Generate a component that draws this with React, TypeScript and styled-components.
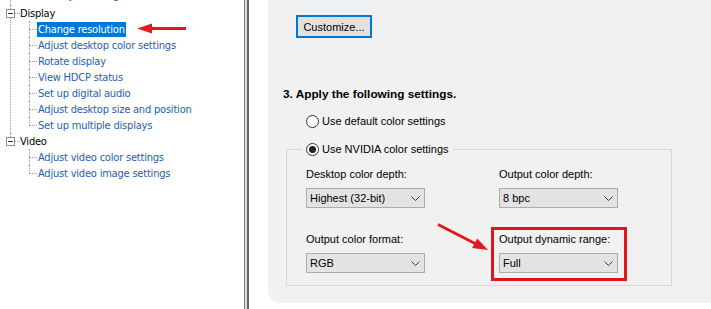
import styled, { createGlobalStyle } from "styled-components";

const GlobalStyle = createGlobalStyle`
  html, body {
    margin: 0;
    padding: 0;
    background: #ffffff;
  }
  body {
    width: 711px;
    height: 309px;
    overflow: hidden;
  }
`;

const Screen = styled.div`
  position: relative;
  display: flex;
  width: 711px;
  height: 309px;
  overflow: hidden;
  background: #ffffff;
`;

/* ---------- left tree ---------- */

const Sidebar = styled.div`
  width: 244px;
  flex-shrink: 0;
  overflow: hidden;
  background: #ffffff;
  font-family: "DejaVu Sans Condensed", "Liberation Sans", Tahoma, sans-serif;
  font-size: 11px;
  letter-spacing: -0.2px;
`;

const Tree = styled.div`
  margin-top: -11px;
`;

const Group = styled.div<{ $last?: boolean }>`
  position: relative;

  &::before {
    content: "";
    position: absolute;
    left: 10px;
    top: 0;
    height: ${(p) => (p.$last ? "8px" : "100%")};
    border-left: 1px dotted #a0a0a0;
  }
`;

const GroupHead = styled.div`
  position: relative;
  height: 16px;
  display: flex;
  align-items: center;
  padding-left: 6px;
  color: #000000;
`;

const ExpandBox = styled.span`
  position: relative;
  z-index: 1;
  width: 9px;
  height: 9px;
  box-sizing: border-box;
  border: 1px solid #8f8f8f;
  background: #ffffff;
  display: flex;
  align-items: center;
  justify-content: center;

  &::after {
    content: "";
    width: 5px;
    height: 1px;
    background: #333333;
  }
`;

const Stub = styled.span<{ $w: number }>`
  width: ${(p) => p.$w}px;
  height: 0;
  border-top: 1px dotted #a0a0a0;
`;

const ChildRow = styled.div<{ $last?: boolean; $shift?: number }>`
  position: relative;
  height: 16px;
  display: flex;
  align-items: center;
  padding-left: 29px;

  &::before {
    content: "";
    position: absolute;
    left: 29px;
    top: 0;
    height: ${(p) => (p.$last ? "8px" : "16px")};
    border-left: 1px dotted #a0a0a0;
  }
`;

const ItemLabel = styled.span<{ $selected?: boolean; $raise?: number }>`
  padding: 0 1px;
  line-height: 15px;
  white-space: nowrap;
  margin-top: ${(p) => -(p.$raise ?? 0)}px;
  color: ${(p) => (p.$selected ? "#ffffff" : "#1a60b8")};
  background: ${(p) => (p.$selected ? "#0078d7" : "transparent")};
`;

const Splitter = styled.div`
  width: 5px;
  flex-shrink: 0;
  box-sizing: border-box;
  border-left: 1px solid #7c7c7c;
  border-right: 2px solid #666666;
  background: #dedede;
`;

/* ---------- right settings ---------- */

const Content = styled.div`
  flex: 1;
  padding-left: 19px;
  background: #ffffff;
  font-family: "Liberation Sans", "Segoe UI", sans-serif;
  font-size: 11px;
  color: #000000;
`;

const Panel = styled.div`
  height: 303px;
  box-sizing: border-box;
  padding: 15px 0 0 15px;
  background: #f1f1f1;
  border-bottom-left-radius: 12px;
  display: flex;
  flex-direction: column;
  align-items: flex-start;
`;

const Button = styled.div`
  margin-left: 13px;
  width: 76px;
  height: 23px;
  box-sizing: border-box;
  border: 2px solid #0078d7;
  background: #e1e1e1;
  display: flex;
  align-items: center;
  justify-content: center;
`;

const Heading = styled.div`
  margin-top: 48px;
  line-height: 16px;
  font-size: 11.8px;
  font-weight: bold;
`;

const RadioRow = styled.label<{ $offset?: number }>`
  margin-left: ${(p) => p.$offset ?? 0}px;
  height: 16px;
  display: flex;
  align-items: center;
  gap: 3px;
  white-space: nowrap;
`;

const RadioCircle = styled.span<{ $checked?: boolean }>`
  width: 13px;
  height: 13px;
  box-sizing: border-box;
  border-radius: 50%;
  border: 1px solid #333333;
  background: #ffffff;
  display: flex;
  align-items: center;
  justify-content: center;

  &::after {
    content: "";
    width: 7px;
    height: 7px;
    border-radius: 50%;
    background: ${(p) => (p.$checked ? "#222222" : "transparent")};
  }
`;

const Spacer = styled.div<{ $h: number }>`
  height: ${(p) => p.$h}px;
`;

const GroupBox = styled.fieldset`
  margin: 12px 0 0 3px;
  width: 386px;
  box-sizing: border-box;
  padding: 5px 44px 4px 11px;
  border: 1px solid #d7d7d7;
  min-inline-size: 0;
`;

const Legend = styled.legend`
  margin-left: 4px;
  padding: 0 4px;
`;

const CellGrid = styled.div`
  display: grid;
  grid-template-columns: 136px 136px;
  column-gap: 57px;
  row-gap: 11px;
`;

const Cell = styled.div<{ $highlight?: boolean }>`
  border: 3px solid ${(p) => (p.$highlight ? "#e0141b" : "transparent")};
  padding: 1px 6px 5px 5px;
`;

const FieldLabel = styled.div`
  height: 16px;
  line-height: 16px;
  white-space: nowrap;
`;

const Select = styled.div`
  margin-top: 6px;
  width: 119px;
  height: 20px;
  box-sizing: border-box;
  border: 1px solid #adadad;
  background: #e3e3e3;
  display: flex;
  align-items: center;
  justify-content: space-between;
  padding: 0 4px 0 3px;
`;

const Chevron = () => (
  <svg width="9" height="5" viewBox="0 0 9 5">
    <path d="M0.5 0.5 L4.5 4.5 L8.5 0.5" fill="none" stroke="#3a3a3a" strokeWidth="1" />
  </svg>
);

const Overlay = styled.svg`
  position: absolute;
  left: 0;
  top: 0;
  pointer-events: none;
`;

const displayItems = [
  "Change resolution",
  "Adjust desktop color settings",
  "Rotate display",
  "View HDCP status",
  "Set up digital audio",
  "Adjust desktop size and position",
  "Set up multiple displays",
];

const videoItems = ["Adjust video color settings", "Adjust video image settings"];

const fields = [
  { label: "Desktop color depth:", value: "Highest (32-bit)" },
  { label: "Output color depth:", value: "8 bpc" },
  { label: "Output color format:", value: "RGB" },
  { label: "Output dynamic range:", value: "Full", highlight: true },
];

export default function App() {
  return (
    <>
      <GlobalStyle />
      <Screen>
        <Sidebar>
          <Tree>
            <Group>
              <ChildRow $last>
                <Stub $w={8} />
                <ItemLabel $raise={3}>Set PhysX Configuration</ItemLabel>
              </ChildRow>
            </Group>
            <Group>
              <GroupHead>
                <ExpandBox />
                <Stub $w={5} />
                <span>Display</span>
              </GroupHead>
              {displayItems.map((item, i) => (
                <ChildRow key={item} $last={i === displayItems.length - 1}>
                  <Stub $w={8} />
                  <ItemLabel $selected={i === 0}>{item}</ItemLabel>
                </ChildRow>
              ))}
            </Group>
            <Group $last>
              <GroupHead>
                <ExpandBox />
                <Stub $w={5} />
                <span>Video</span>
              </GroupHead>
              {videoItems.map((item, i) => (
                <ChildRow key={item} $last={i === videoItems.length - 1}>
                  <Stub $w={8} />
                  <ItemLabel>{item}</ItemLabel>
                </ChildRow>
              ))}
            </Group>
          </Tree>
        </Sidebar>
        <Splitter />
        <Content>
          <Panel>
            <Button>Customize...</Button>
            <Heading>3. Apply the following settings.</Heading>
            <Spacer $h={11} />
            <RadioRow $offset={23}>
              <RadioCircle />
              Use default color settings
            </RadioRow>
            <GroupBox>
              <Legend>
                <RadioRow>
                  <RadioCircle $checked />
                  Use NVIDIA color settings
                </RadioRow>
              </Legend>
              <CellGrid>
                {fields.map((f) => (
                  <Cell key={f.label} $highlight={f.highlight}>
                    <FieldLabel>{f.label}</FieldLabel>
                    <Select>
                      <span>{f.value}</span>
                      <Chevron />
                    </Select>
                  </Cell>
                ))}
              </CellGrid>
            </GroupBox>
          </Panel>
        </Content>

        <Overlay width="711" height="309" viewBox="0 0 711 309">
          <line x1="149" y1="28.5" x2="186" y2="28.5" stroke="#e3191b" strokeWidth="3" />
          <polygon points="137,28.5 152,23.5 152,33.5" fill="#e3191b" />
          <line x1="438" y1="224.5" x2="476" y2="244" stroke="#e3191b" strokeWidth="3" />
          <polygon points="488,250 472.2,248 477.2,238.5" fill="#e3191b" />
        </Overlay>
      </Screen>
    </>
  );
}
